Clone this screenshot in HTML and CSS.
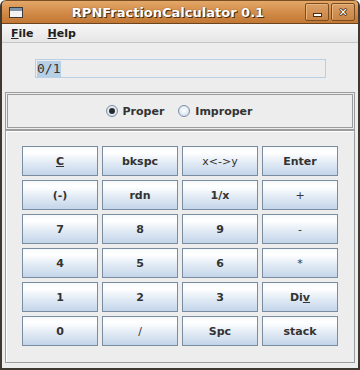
FILE: index.html
```html
<!DOCTYPE html>
<html>
<head>
<meta charset="utf-8">
<link rel="stylesheet" href="styles.css">
</head>
<body>
<div class="window">
  <div class="titlebar">
    <div class="win-icon"><span class="win-icon-bar"></span></div>
    <div class="title">RPNFractionCalculator 0.1</div>
    <div class="tb-buttons">
      <div class="tb-btn"><span class="min-glyph"></span></div>
      <div class="tb-btn"><span class="close-glyph">✕</span></div>
    </div>
  </div>
  <div class="menubar">
    <span class="menu-item"><u>F</u>ile</span>
    <span class="menu-item"><u>H</u>elp</span>
  </div>
  <div class="content">
    <div class="field"><span class="sel">0/1</span></div>
    <div class="radio-panel">
      <label class="radio"><span class="circle checked"></span>Proper</label>
      <label class="radio"><span class="circle"></span>Improper</label>
    </div>
    <div class="keys-panel">
      <div class="keys">
        <div class="key"><u>C</u></div>
        <div class="key">bkspc</div>
        <div class="key thin">x&lt;-&gt;y</div>
        <div class="key">Enter</div>
        <div class="key">(-)</div>
        <div class="key">rdn</div>
        <div class="key">1/x</div>
        <div class="key thin">+</div>
        <div class="key">7</div>
        <div class="key">8</div>
        <div class="key">9</div>
        <div class="key thin">-</div>
        <div class="key">4</div>
        <div class="key">5</div>
        <div class="key">6</div>
        <div class="key thin">*</div>
        <div class="key">1</div>
        <div class="key">2</div>
        <div class="key">3</div>
        <div class="key">Di<u>v</u></div>
        <div class="key">0</div>
        <div class="key thin">/</div>
        <div class="key">Spc</div>
        <div class="key">stack</div>
      </div>
    </div>
  </div>
</div>
</body>
</html>
```
FILE: styles.css
```css
* { box-sizing: border-box; }
html, body { margin: 0; padding: 0; background: #ffffff; }
body { font-family: "DejaVu Sans", sans-serif; }

.window {
  width: 360px;
  height: 370px;
  display: flex;
  flex-direction: column;
  background: #ededed;
  border-left: 2px solid #3f3831;
  border-right: 2px solid #3f3831;
  border-bottom: 2px solid #3f3831;
  border-radius: 6px 6px 0 0;
  overflow: hidden;
}

.titlebar {
  height: 24px;
  margin: 0 -2px;
  display: flex;
  align-items: center;
  padding: 0 4px 0 8px;
  background: linear-gradient(#e3a869 0%, #d58e4b 45%, #c37835 100%);
  border: 1px solid #7a4e22;
  border-bottom-color: #6b4420;
  border-radius: 6px 6px 0 0;
}

.win-icon {
  width: 14px;
  height: 11px;
  margin-top: 1px;
  border: 1px solid #3b3b3b;
  background: #f4f4f4;
  display: flex;
  flex-direction: column;
}
.win-icon-bar {
  height: 3px;
  background: #7f93ab;
}

.title {
  flex: 1;
  text-align: center;
  padding-left: 8px;
  font-weight: bold;
  font-size: 13px;
  color: #ffffff;
  text-shadow: 1px 1px 0 #4a2c10, 0 0 1px #6b4420;
}

.tb-buttons {
  display: flex;
  gap: 2px;
}
.tb-btn {
  width: 24px;
  height: 18px;
  border: 1px solid #7a4e22;
  border-radius: 2px;
  box-shadow: inset 1px 1px 0 #e8b57f;
  background: linear-gradient(#dba068, #c98444);
  display: flex;
  align-items: center;
  justify-content: center;
}
.min-glyph {
  width: 9px;
  height: 4px;
  margin-top: 6px;
  background: #ffffff;
  border: 1px solid #4a2c10;
}
.close-glyph {
  color: #ffffff;
  font-size: 11px;
  font-weight: bold;
  line-height: 1;
  text-shadow: 1px 0 0 #4a2c10, -1px 0 0 #4a2c10, 0 1px 0 #4a2c10, 0 -1px 0 #4a2c10;
}

.menubar {
  height: 19px;
  display: flex;
  align-items: center;
  gap: 14px;
  padding-left: 9px;
  background: linear-gradient(#f6f6f6, #e6e6e6);
  border-bottom: 1px solid #c6c6c6;
  font-size: 11px;
  font-weight: bold;
  color: #202020;
}

.content {
  flex: 1;
  display: flex;
  flex-direction: column;
  padding: 16px 3px 5px 3px;
}

.field {
  margin-left: 30px;
  width: 291px;
  height: 19px;
  border: 1px solid #b8d0e6;
  background: #ededed;
  padding: 1px 0 0 1px;
  font-family: "DejaVu Sans Mono", monospace;
  font-size: 13px;
  line-height: 16px;
  color: #333333;
}
.sel {
  background: #b8d0e6;
  display: inline-block;
  height: 16px;
  padding-right: 1px;
}

.radio-panel {
  margin-top: 14px;
  height: 38px;
  border: 3px double #9c9c9c;
  display: flex;
  align-items: center;
  justify-content: center;
  gap: 14px;
  font-size: 11px;
  font-weight: bold;
  color: #333333;
  padding-right: 2px;
}
.radio {
  display: flex;
  align-items: center;
  gap: 5px;
}
.circle {
  width: 12px;
  height: 12px;
  border-radius: 50%;
  border: 1px solid #7d8fa3;
  background: radial-gradient(circle at 50% 45%, #ffffff 0%, #eaf1f8 40%, #c1d3e6 100%);
  display: flex;
  align-items: center;
  justify-content: center;
}
.circle.checked::after {
  content: "";
  width: 6px;
  height: 6px;
  border-radius: 50%;
  background: #2a2a2a;
}

.keys-panel {
  flex: 1;
  border: 1px solid #9c9c9c;
  box-shadow: inset 1px 1px 0 #ffffff;
  padding: 15px 0 0 16px;
}
.keys {
  display: grid;
  grid-template-columns: repeat(4, 76px);
  grid-auto-rows: 30px;
  gap: 4px;
}
.key {
  border: 1px solid #7a8ca0;
  background: linear-gradient(#f6f9fc 0%, #ffffff 20%, #dfe9f4 60%, #c3d5e9 100%);
  display: flex;
  align-items: center;
  justify-content: center;
  font-size: 11px;
  font-weight: bold;
  color: #333333;
}
.key.thin { font-weight: normal; }
```
